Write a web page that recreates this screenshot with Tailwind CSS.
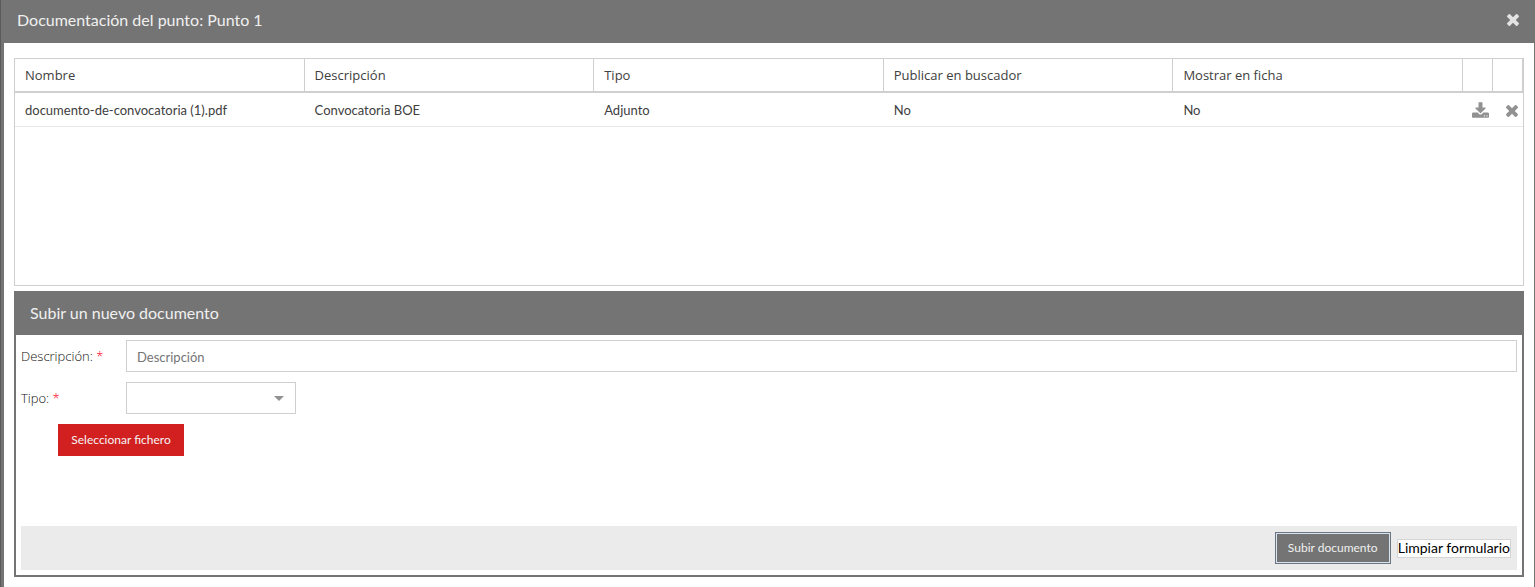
<!DOCTYPE html>
<html lang="es">

<head>
    <meta charset="UTF-8">
    <meta name="viewport" content="width=device-width, initial-scale=1.0">
    <title>Documentación del punto</title>
    <script src="https://cdn.jsdelivr.net/npm/@tailwindcss/browser@4"></script>
</head>

<body class="bg-[#747474] font-['Lato',sans-serif] text-[13px] leading-5 text-[#404040]">
    <div class="min-h-screen flex flex-col border-l border-[#5c5a59]">
        <header class="h-[43px] flex items-center justify-between px-4 pb-[3px]">
            <h1 class="text-base text-[#f0f0f0]">Documentación del punto: Punto 1</h1>
            <button type="button" title="Cerrar" class="text-[#e3e3e3]">
                <svg class="size-3" viewBox="110 366 1188 1188" fill="currentColor">
                    <path
                        d="M1298 1322q0 40-28 68l-136 136q-28 28-68 28t-68-28l-294-294-294 294q-28 28-68 28t-68-28l-136-136q-28-28-28-68t28-68l294-294-294-294q-28-28-28-68t28-68l136-136q28-28 68-28t68 28l294 294 294-294q28-28 68-28t68 28l136 136q28 28 28 68t-28 68l-294 294 294 294q28 28 28 68z" />
                </svg>
            </button>
        </header>

        <main class="grow ml-[3px] mr-px bg-white px-2.5 pt-[15px] pb-2.5 flex flex-col gap-[5px]">
            <!-- Documents grid -->
            <div class="h-[228px] border border-[#cfcfcf]">
                <table class="w-full table-fixed border-separate border-spacing-0 text-left">
                    <thead class="font-['Open_Sans',sans-serif]">
                        <tr class="h-[34px]">
                            <th class="font-normal px-2.5 border-r border-b-2 border-[#cfcfcf]">Nombre</th>
                            <th class="font-normal px-2.5 border-r border-b-2 border-[#cfcfcf]">Descripción</th>
                            <th class="font-normal px-2.5 border-r border-b-2 border-[#cfcfcf]">Tipo</th>
                            <th class="font-normal px-2.5 border-r border-b-2 border-[#cfcfcf]">Publicar en buscador</th>
                            <th class="font-normal px-2.5 border-r border-b-2 border-[#cfcfcf]">Mostrar en ficha</th>
                            <th class="w-[30px] border-r border-b-2 border-[#cfcfcf]"></th>
                            <th class="w-[30px] border-r border-b-2 border-[#cfcfcf]"></th>
                        </tr>
                    </thead>
                    <tbody>
                        <tr class="h-[34px]">
                            <td class="px-2.5 border-b border-[#e8e8e8]">documento-de-convocatoria (1).pdf</td>
                            <td class="px-2.5 border-b border-[#e8e8e8]">Convocatoria BOE</td>
                            <td class="px-2.5 border-b border-[#e8e8e8]">Adjunto</td>
                            <td class="px-2.5 border-b border-[#e8e8e8]">No</td>
                            <td class="px-2.5 border-b border-[#e8e8e8]">No</td>
                            <td class="pl-[9px] border-b border-[#e8e8e8]">
                                <button type="button" title="Descargar" class="block text-[#919191]">
                                    <svg class="w-[17px] h-4" viewBox="64 0 1664 1536" fill="currentColor">
                                        <path
                                            d="M1344 1344q0-26-19-45t-45-19-45 19-19 45 19 45 45 19 45-19 19-45zm256 0q0-26-19-45t-45-19-45 19-19 45 19 45 45 19 45-19 19-45zm128-224v320q0 40-28 68t-68 28h-1472q-40 0-68-28t-28-68v-320q0-40 28-68t68-28h465l135 136q58 56 136 56t136-56l136-136h464q40 0 68 28t28 68zm-325-569q17 41-14 70l-448 448q-18 19-45 19t-45-19l-448-448q-31-29-14-70 17-39 59-39h256v-448q0-26 19-45t45-19h256q26 0 45 19t19 45v448h256q42 0 59 39z" />
                                    </svg>
                                </button>
                            </td>
                            <td class="pl-[13px] pt-0.5 border-b border-[#e8e8e8]">
                                <button type="button" title="Eliminar" class="block text-[#919191]">
                                    <svg class="size-3" viewBox="110 366 1188 1188" fill="currentColor">
                                        <path
                                            d="M1298 1322q0 40-28 68l-136 136q-28 28-68 28t-68-28l-294-294-294 294q-28 28-68 28t-68-28l-136-136q-28-28-28-68t28-68l294-294-294-294q-28-28-28-68t28-68l136-136q28-28 68-28t68 28l294 294 294-294q28-28 68-28t68 28l136 136q28 28 28 68t-28 68l-294 294 294 294q28 28 28 68z" />
                                    </svg>
                                </button>
                            </td>
                        </tr>
                    </tbody>
                </table>
            </div>

            <!-- Upload form -->
            <section class="border-2 border-t-0 border-[#747474]">
                <h2 class="h-11 flex items-center px-3.5 bg-[#747474] text-base text-[#f0f0f0]">Subir un nuevo documento</h2>
                <form class="p-[5px]">
                    <div class="h-[186px] flex flex-col items-start gap-2.5">
                        <div class="w-full flex items-center">
                            <label for="descripcion" class="w-[105px] shrink-0 font-['Open_Sans',sans-serif] font-light text-[#111]">Descripción: <span
                                    class="text-[#ff0022]">*</span></label>
                            <input id="descripcion" type="text" placeholder="Descripción"
                                class="grow h-8 px-2.5 pt-0.5 border border-[#cfcfcf] bg-white placeholder:text-[#757575]">
                        </div>
                        <div class="flex items-center">
                            <label for="tipo" class="w-[105px] shrink-0 font-['Open_Sans',sans-serif] font-light text-[#111]">Tipo: <span
                                    class="text-[#ff0022]">*</span></label>
                            <div class="relative">
                                <select id="tipo" class="block w-[170px] h-8 px-2.5 appearance-none border border-[#cfcfcf] bg-white">
                                    <option></option>
                                    <option>Adjunto</option>
                                </select>
                                <svg class="absolute right-3 top-3.5 w-2.5 h-[5px] pointer-events-none text-[#919191]"
                                    viewBox="0 0 10 5" fill="currentColor">
                                    <path d="M0 0h10L5 5z" />
                                </svg>
                            </div>
                        </div>
                        <button type="button" class="ml-[37px] w-[126px] h-8 bg-[#d22020] text-xs text-[#f4f4f4]">Seleccionar fichero</button>
                    </div>
                    <div class="h-11 flex items-center justify-end gap-1.5 px-1.5 bg-[#ebebeb]">
                        <button type="submit"
                            class="w-[116px] h-8 border border-[#6f757c] bg-[#747474] text-xs text-[#f0f0f0] inset-ring inset-ring-[#d5e4f2]">Subir documento</button>
                        <button type="reset" class="border border-[#d5d5d5] bg-white pb-px text-sm leading-4 text-black">Limpiar formulario</button>
                    </div>
                </form>
            </section>
        </main>
    </div>
</body>

</html>
